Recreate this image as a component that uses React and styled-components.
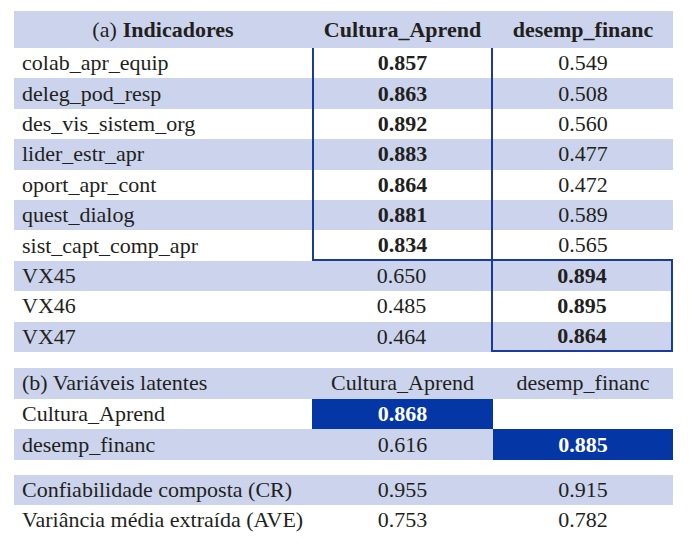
import React from 'react'
import styled, { createGlobalStyle } from 'styled-components'

const GlobalStyle = createGlobalStyle`
    body {
        margin: 0;
        background: #ffffff;
        color: #231f20;
    }
`

const BAND = '#cbd4ec'
const LINE = '#1a3a9c'
const FILL = '#0536a6'

const Page = styled.div`
    padding: 11px 0 0 14px;
    width: 659px;
    display: flex;
    flex-direction: column;
    font-family: 'Liberation Serif', 'DejaVu Serif', serif;
`

const Block = styled.div`
    display: flex;
    flex-direction: column;
    margin-bottom: ${(p) => p.$gap || 0}px;
`

const Row = styled.div`
    display: grid;
    grid-template-columns: 298px 181px 180px;
    height: ${(p) => p.$h}px;
    background: ${(p) => (p.$band ? BAND : 'transparent')};
    font-size: 22px;
`

const Cell = styled.div`
    box-sizing: border-box;
    display: flex;
    align-items: center;
    justify-content: ${(p) => (p.$left ? 'flex-start' : 'center')};
    padding-left: ${(p) => (p.$left ? '8px' : '0')};
    font-weight: ${(p) => (p.$bold ? 700 : 400)};
    background: ${(p) => (p.$fill ? FILL : 'transparent')};
    color: ${(p) => (p.$fill ? '#ffffff' : 'inherit')};
    border-left: ${(p) => (p.$bl ? `2px solid ${LINE}` : 'none')};
    border-right: ${(p) => (p.$br ? `2px solid ${LINE}` : 'none')};
    border-bottom: ${(p) => (p.$bb ? `2px solid ${LINE}` : 'none')};
    white-space: nowrap;
`

const Thin = styled.span`
    font-weight: 400;
    margin-right: 6px;
`

const indicators = [
    ['colab_apr_equip', '0.857', '0.549'],
    ['deleg_pod_resp', '0.863', '0.508'],
    ['des_vis_sistem_org', '0.892', '0.560'],
    ['lider_estr_apr', '0.883', '0.477'],
    ['oport_apr_cont', '0.864', '0.472'],
    ['quest_dialog', '0.881', '0.589'],
    ['sist_capt_comp_apr', '0.834', '0.565'],
    ['VX45', '0.650', '0.894'],
    ['VX46', '0.485', '0.895'],
    ['VX47', '0.464', '0.864'],
]

function App() {
    return (
        <Page>
            <GlobalStyle />
            <Block $gap={16}>
                <Row $h={37} $band>
                    <Cell $bold><Thin>(a)</Thin>Indicadores</Cell>
                    <Cell $bold>Cultura_Aprend</Cell>
                    <Cell $bold>desemp_financ</Cell>
                </Row>
                {indicators.map(([name, a, b], i) => {
                    const first = i < 7
                    return (
                        <Row key={name} $h={30.4} $band={i % 2 === 1}>
                            <Cell $left>{name}</Cell>
                            <Cell $bold={first} $bl={first} $br $bb={i === 6}>{a}</Cell>
                            <Cell $bold={!first} $br={!first} $bb={i === 6 || i === 9}>{b}</Cell>
                        </Row>
                    )
                })}
            </Block>

            <Block $gap={15}>
                <Row $h={31} $band>
                    <Cell $left>(b) Variáveis latentes</Cell>
                    <Cell>Cultura_Aprend</Cell>
                    <Cell>desemp_financ</Cell>
                </Row>
                <Row $h={30.5}>
                    <Cell $left>Cultura_Aprend</Cell>
                    <Cell $bold $fill>0.868</Cell>
                    <Cell />
                </Row>
                <Row $h={30.5} $band>
                    <Cell $left>desemp_financ</Cell>
                    <Cell>0.616</Cell>
                    <Cell $bold $fill>0.885</Cell>
                </Row>
            </Block>

            <Block>
                <Row $h={30} $band>
                    <Cell $left>Confiabilidade composta (CR)</Cell>
                    <Cell>0.955</Cell>
                    <Cell>0.915</Cell>
                </Row>
                <Row $h={30.5}>
                    <Cell $left>Variância média extraída (AVE)</Cell>
                    <Cell>0.753</Cell>
                    <Cell>0.782</Cell>
                </Row>
            </Block>
        </Page>
    )
}

export default App
